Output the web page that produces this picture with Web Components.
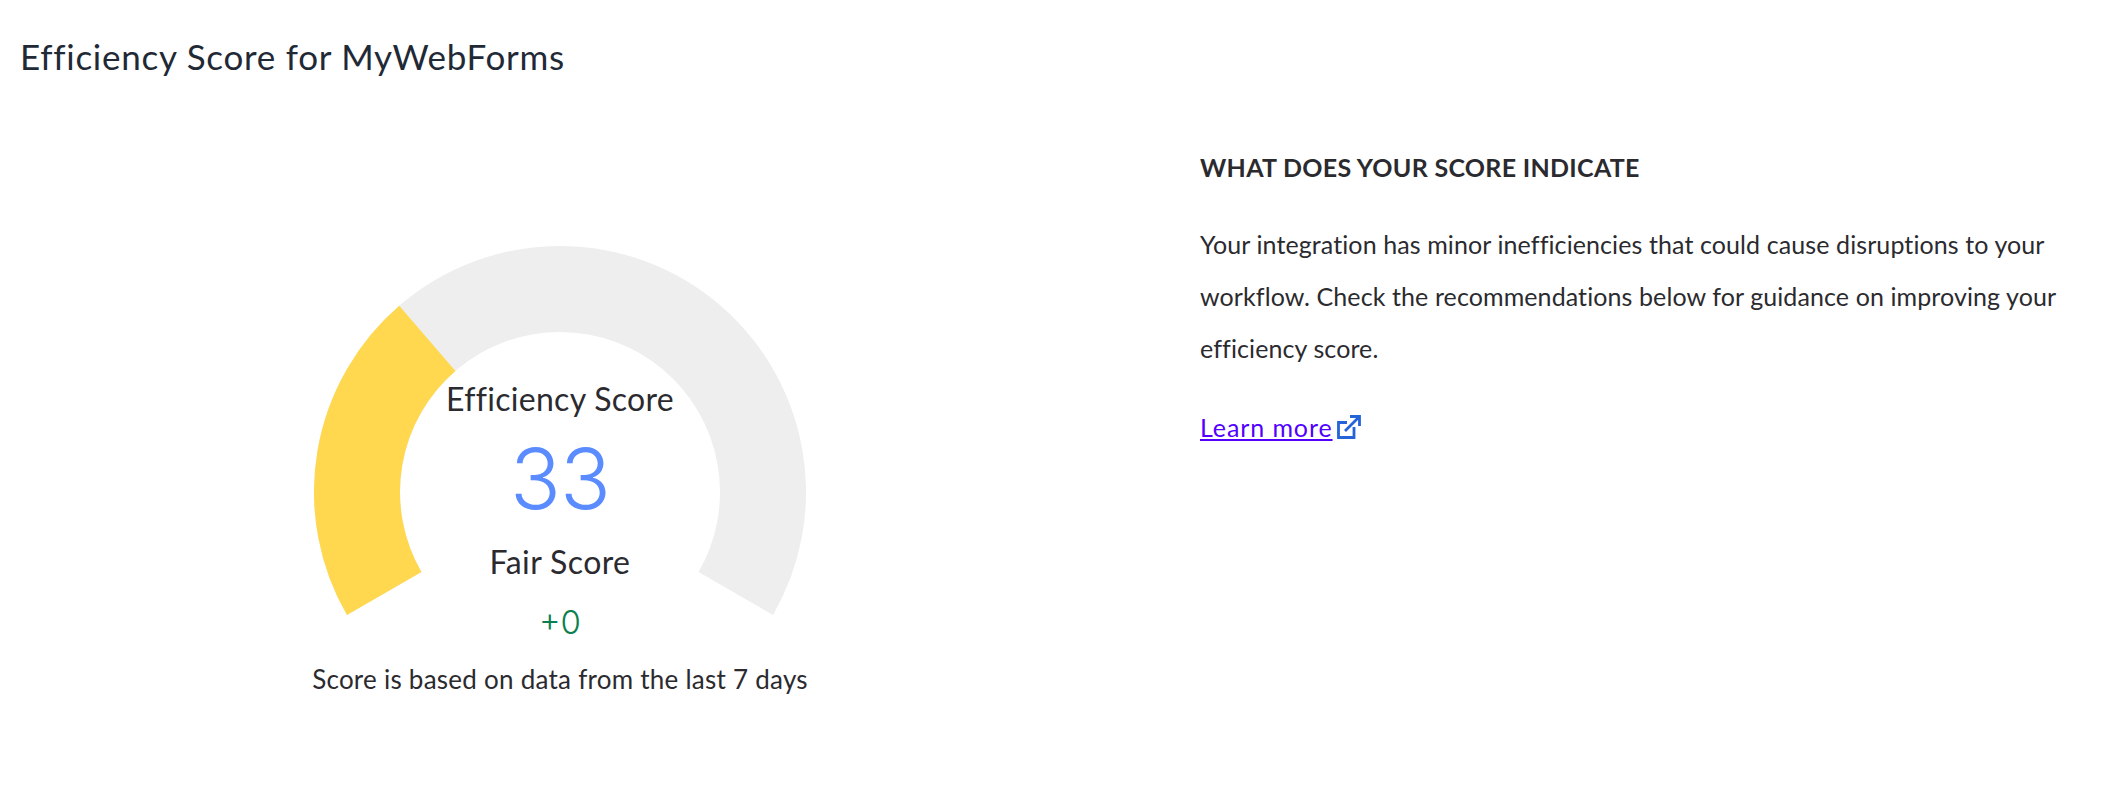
<!DOCTYPE html>
<html lang="en">
<head>
<meta charset="utf-8">
<title>Efficiency Score</title>
<style>
    html, body { margin: 0; background: #fff; }
    body { font-family: Lato, "Noto Sans", sans-serif; color: #2b2b2f; font-variant-ligatures: none; }
</style>
</head>
<body>
<score-page heading="Efficiency Score for MyWebForms">
    <score-gauge slot="gauge" score="33" rating="Fair Score" delta="+0" note="Score is based on data from the last 7 days"></score-gauge>
    <score-info slot="info" heading="WHAT DOES YOUR SCORE INDICATE">
        Your integration has minor inefficiencies that could cause disruptions to your workflow. Check the recommendations below for guidance on improving your efficiency score.
        <external-link slot="link" href="#">Learn more</external-link>
    </score-info>
</score-page>

<script>
class ScorePage extends HTMLElement {
    constructor() {
        super();
        this.attachShadow({ mode: 'open' });
        this.shadowRoot.innerHTML = `
            <style>
                :host { display: block; width: 2114px; height: 800px; overflow: hidden; }
                h1 {
                    margin: 0;
                    padding: 36px 0 0 20px;
                    font: 400 35px/40px Lato, sans-serif;
                    letter-spacing: 0.75px;
                    color: #1f2a36;
                }
                .columns {
                    display: grid;
                    grid-template-columns: 1120px 1fr;
                    column-gap: 80px;
                    padding-top: 55px;
                }
            </style>
            <h1>${this.getAttribute('heading')}</h1>
            <div class="columns">
                <slot name="gauge"></slot>
                <slot name="info"></slot>
            </div>
        `;
    }
}

class ScoreGauge extends HTMLElement {
    constructor() {
        super();
        this.attachShadow({ mode: 'open' });
        const score = Number(this.getAttribute('score'));
        // arc sweeps 240deg, from 30deg below horizontal on the left round to the right
        const r = 203, cx = 246, cy = 246;
        const point = deg => {
            const a = deg * Math.PI / 180;
            return `${(cx + r * Math.cos(a)).toFixed(2)} ${(cy + r * Math.sin(a)).toFixed(2)}`;
        };
        const start = 150;
        const mid = start + 240 * score / 100;
        const end = start + 240;
        this.shadowRoot.innerHTML = `
            <style>
                :host { display: block; text-align: center; padding-top: 115px; }
                .stack { display: grid; justify-items: center; }
                .stack > * { grid-area: 1 / 1; }
                svg { display: block; width: 492px; height: 369px; }
                .labels { display: flex; flex-direction: column; align-items: center; padding-top: 133px; }
                .title { font-size: 32px; line-height: 40px; letter-spacing: 0.3px; }
                .score { font: 300 84px/80px Inter, sans-serif; letter-spacing: -1px; color: #5b8cff; margin-top: 20px; }
                .rating { font-size: 32px; line-height: 40px; letter-spacing: 0.4px; margin-top: 23px; }
                .delta { font: 300 33px/36px Inter, sans-serif; color: #0b7f4f; margin-top: 22px; }
                .note { font-size: 26px; line-height: 32px; letter-spacing: 0.25px; margin-top: 23px; }
            </style>
            <div class="stack">
                <svg viewBox="0 0 492 369" aria-hidden="true">
                    <path d="M${point(start)} A${r} ${r} 0 1 1 ${point(end)}" fill="none" stroke="#eeeeee" stroke-width="86"/>
                    <path d="M${point(start)} A${r} ${r} 0 0 1 ${point(mid)}" fill="none" stroke="#ffd84f" stroke-width="86"/>
                </svg>
                <div class="labels">
                    <div class="title">Efficiency Score</div>
                    <div class="score">${score}</div>
                    <div class="rating">${this.getAttribute('rating')}</div>
                    <div class="delta">${this.getAttribute('delta')}</div>
                    <div class="note">${this.getAttribute('note')}</div>
                </div>
            </div>
        `;
    }
}

class ScoreInfo extends HTMLElement {
    constructor() {
        super();
        this.attachShadow({ mode: 'open' });
        this.shadowRoot.innerHTML = `
            <style>
                :host { display: block; width: 885px; padding-top: 20px; font-size: 25px; line-height: 52px; letter-spacing: 0.1px; }
                h2 { margin: 0 0 35px; font: 700 25px/32px Lato, sans-serif; letter-spacing: 0.3px; color: #2b2b2f; }
                .link { display: block; margin-top: 27px; }
            </style>
            <h2>${this.getAttribute('heading')}</h2>
            <slot></slot>
            <div class="link"><slot name="link"></slot></div>
        `;
    }
}

class ExternalLink extends HTMLElement {
    constructor() {
        super();
        this.attachShadow({ mode: 'open' });
        this.shadowRoot.innerHTML = `
            <style>
                :host { display: inline-flex; align-items: center; gap: 4px; }
                a { color: #5200ff; text-decoration: underline; letter-spacing: 0.9px; }
                svg { width: 24px; height: 24px; display: block; }
            </style>
            <a href="${this.getAttribute('href')}"><slot></slot></a>
            <svg viewBox="0 0 24 24" fill="none" stroke="#2563d9" stroke-width="2.8" aria-hidden="true">
                <path d="M10 7.5H1.5v15h15.5V12"/>
                <path d="M8 16L22 2M13 1.5h9.5V11"/>
            </svg>
        `;
    }
}

customElements.define('score-page', ScorePage);
customElements.define('score-gauge', ScoreGauge);
customElements.define('score-info', ScoreInfo);
customElements.define('external-link', ExternalLink);
</script>
</body>
</html>
